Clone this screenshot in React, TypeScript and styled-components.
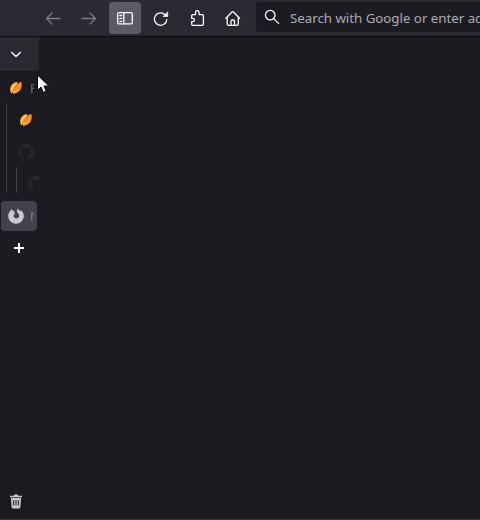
import React from "react";
import styled, { createGlobalStyle } from "styled-components";

const GlobalStyle = createGlobalStyle`
  body { margin: 0; background: #1c1b22; overflow: hidden; }
  * { box-sizing: border-box; }
`;

const Browser = styled.div`
  display: flex;
  flex-direction: column;
  width: 480px;
  height: 520px;
  overflow: hidden;
  position: relative;
  background: #1c1b22;
  border-bottom: 1px solid #38373d;
  color: #fbfbfe;
  font-family: "Noto Sans", "Open Sans", sans-serif;
`;

const Toolbar = styled.header`
  display: flex;
  flex: none;
  gap: 4px;
  height: 37px;
  padding: 2px 0 0 37px;
  background: #2b2a33;
  border-bottom: 1px solid #0c0c0d;
`;

const ToolButton = styled.button<{ $active?: boolean; $dim?: boolean }>`
  display: flex;
  flex: none;
  align-items: center;
  justify-content: center;
  width: 32px;
  height: 32px;
  padding: 0;
  border: 0;
  border-radius: 4px;
  background: ${(p) => (p.$active ? "#5b5b66" : "transparent")};
  color: ${(p) => (p.$dim ? "#7d7c83" : "#fbfbfe")};
`;

const UrlBar = styled.div`
  display: flex;
  flex: 1;
  align-items: center;
  gap: 10px;
  height: 30px;
  margin-left: 3px;
  padding-left: 8px;
  border-radius: 4px 0 0 4px;
  background: #1c1b22;
  overflow: hidden;
`;

const Placeholder = styled.span`
  flex: none;
  color: #acabb1;
  font-size: 13.3px;
  letter-spacing: -0.02px;
  line-height: 30px;
  white-space: nowrap;
  padding-top: 2px;
`;

const Icon = styled.svg`
  display: block;
  flex: none;
  width: 16px;
  height: 16px;
  fill: none;
  stroke: currentColor;
  stroke-width: 1.3;
  stroke-linecap: round;
  stroke-linejoin: round;
`;

const Sidebar = styled.aside`
  display: flex;
  flex: 1;
  flex-direction: column;
  width: 39px;
  overflow: hidden;
`;

const SidebarHeader = styled.div`
  flex: none;
  height: 34px;
  padding: 9px 0 0 8px;
  background: #2b2a33;
`;

const TabTree = styled.div`
  flex: none;
  padding-top: 1px;
`;

const TabRow = styled.div<{ $inset?: number; $last?: boolean }>`
  display: flex;
  align-items: ${(p) => (p.$last ? "flex-start" : "center")};
  gap: 6px;
  height: ${(p) => (p.$last ? 25 : 32)}px;
  padding-top: ${(p) => (p.$last ? 8 : 0)}px;
  padding-left: ${(p) => p.$inset ?? 8}px;
`;

const Branch = styled.div<{ $indent: number }>`
  margin-top: -1px;
  margin-left: ${(p) => p.$indent}px;
  padding-top: 1px;
  border-left: 1px solid #42414c;
`;

const ActiveTab = styled.div`
  display: flex;
  flex: none;
  align-items: center;
  gap: 6px;
  width: 36px;
  height: 30px;
  margin: 8px 0 0 1px;
  padding-left: 7px;
  border-radius: 4px;
  background: #42414d;
  overflow: hidden;
`;

const TabLabel = styled.span`
  width: 5px;
  overflow: hidden;
  color: #b0afb6;
  font-size: 13.3px;
  line-height: 18px;
  white-space: nowrap;
  mask-image: linear-gradient(to right, rgba(0, 0, 0, 0.8), rgba(0, 0, 0, 0.15));
`;

const GithubMark = styled(Icon)`
  fill: #252a30;
  stroke: none;
`;

const NewTab = styled.button`
  display: flex;
  flex: none;
  align-items: center;
  justify-content: center;
  width: 38px;
  height: 34px;
  padding: 0;
  border: 0;
  background: none;
  color: #fff;
`;

const TrashButton = styled.button`
  margin: auto 0 10px 8px;
  padding: 0;
  width: 16px;
  border: 0;
  background: none;
  color: #c9c9cd;
`;

const Pointer = styled.svg`
  position: absolute;
  left: 36px;
  top: 74px;
  width: 14px;
  height: 21px;
`;

const Petals = ({ id }: { id: string }) => (
  <Icon viewBox="0 0 16 16" stroke="none">
    <defs>
      <linearGradient id={id} x1="0" y1="0" x2="0.3" y2="1">
        <stop offset="0" stopColor="#ff7a22" />
        <stop offset="1" stopColor="#ffa62e" />
      </linearGradient>
    </defs>
    <path d="M9.400 2C5 2.300 2 5.800 2.200 9.800c.1 1.500.5 2.700 1.200 3.600C6 11 8.800 7.500 9.400 2Z" fill="#ffbe45" stroke="none" />
    <path d="M13.200 2C8.800 3.200 6 6.500 5.200 10c-.3 1.500-.4 2.700 0 4 4.300-.7 7.700-3.500 8.400-7.200.3-1.800.1-3.500-.4-4.800Z" fill={`url(#${id})`} stroke="none" />
    <path d="M9.300 3.500C8.700 6.300 6.900 8.200 5 10.800" stroke="#b86420" strokeWidth=".5" />
  </Icon>
);

const Github = () => (
  <GithubMark viewBox="0 0 16 16">
    <path d="M8 0a8 8 0 0 0-2.530 15.590c.4.070.55-.17.55-.38v-1.490c-2.010.37-2.530-.49-2.690-.94-.09-.23-.48-.94-.82-1.130-.28-.15-.68-.52-.01-.53.63-.01 1.080.58 1.230.82.72 1.210 1.870.87 2.330.66.07-.52.280-.87.51-1.070-1.780-.2-3.640-.89-3.640-3.950 0-.87.31-1.590.82-2.150-.08-.2-.36-1.020.08-2.120 0 0 .67-.21 2.200.82a7.400 7.400 0 0 1 4 0c1.530-1.040 2.200-.82 2.200-.82.44 1.100.16 1.920.08 2.120.51.56.82 1.270.82 2.150 0 3.070-1.870 3.750-3.650 3.950.29.25.54.73.54 1.480v2.200c0 .21.15.46.55.38A8 8 0 0 0 8 0Z" />
  </GithubMark>
);

export default function App() {
  return (
    <Browser>
      <GlobalStyle />
      <Toolbar>
        <ToolButton $dim aria-label="Back">
          <Icon viewBox="0 0 16 16"><path d="M15 8.500H1.500M7 3 1.500 8.500 7 14" /></Icon>
        </ToolButton>
        <ToolButton $dim aria-label="Forward">
          <Icon viewBox="0 0 16 16"><path d="M1 8.500h13.500M9 3l5.500 5.500L9 14" /></Icon>
        </ToolButton>
        <ToolButton $active aria-label="Sidebar">
          <Icon viewBox="0 0 16 16">
            <rect x=".65" y="2.600" width="14.700" height="11.300" rx="1.600" />
            <path d="M6.800 2.600v11.300M2.900 5.500h1.800M2.900 8.400h1.800M2.900 11.300h1.800" />
          </Icon>
        </ToolButton>
        <ToolButton aria-label="Reload">
          <Icon viewBox="0 0 16 16">
            <path d="M12.300 5A6.200 6.200 0 1 0 13.800 9.600" />
            <path d="M14.700 2.200v4.300h-4.300Z" fill="currentColor" strokeWidth=".7" />
          </Icon>
        </ToolButton>
        <ToolButton aria-label="Extensions">
          <Icon viewBox="0 0 16 16">
            <path d="M3.700 4.600h2.800V2.500a1.800 1.800 0 0 1 3.600 0v2.100h3.300q1 0 1 1v8.700q0 1-1 1H3.700q-1 0-1-1v-2.700h1.100a1.600 1.600 0 0 0 0-3.200H2.700V5.600q0-1 1-1Z" />
          </Icon>
        </ToolButton>
        <ToolButton aria-label="Home">
          <Icon viewBox="0 0 16 16">
            <path d="M.9 8.300 7 2q.75-.7 1.500 0l6.100 6.300M2.200 7.300v6.400q0 1.600 1.600 1.600h7.900q1.600 0 1.600-1.600V7.300M6 15.200v-4q0-1.200 1.200-1.200h1.100q1.200 0 1.200 1.200v4" />
          </Icon>
        </ToolButton>
        <UrlBar>
          <Icon viewBox="0 0 16 16">
            <circle cx="6.200" cy="6.100" r="4.800" /><path d="m9.700 9.600 4.900 4.800" />
          </Icon>
          <Placeholder>Search with Google or enter address</Placeholder>
        </UrlBar>
      </Toolbar>
      <Sidebar>
        <SidebarHeader>
          <Icon viewBox="0 0 16 16"><path d="m3.700 6.500 4.300 4 4.300-4" strokeWidth="1.500" /></Icon>
        </SidebarHeader>
        <TabTree>
          <TabRow><Petals id="petal-parent" /><TabLabel>Floorp</TabLabel></TabRow>
          <Branch $indent={6}>
            <TabRow $inset={11}><Petals id="petal-child" /></TabRow>
            <TabRow $inset={11}><Github /></TabRow>
            <Branch $indent={9}>
              <TabRow $inset={11} $last><Github /></TabRow>
            </Branch>
          </Branch>
        </TabTree>
        <ActiveTab>
          <Icon viewBox="0 0 16 16">
            <path d="M2.600 2.400 3.300 1l1.500 1.800 2 .3-.8 1.700 1.600 1-2 1C5 8.700 6.400 10.400 8.400 10.400c1.800 0 3-1.400 2.800-3C11 6 10 5 9.300 4.200c-.6-1-.4-2.600.9-3.700.3 1.300 1.300 1.900 2.200 3l.6-1.200c2 1.600 2.900 3.600 2.800 5.900A7.800 7.800 0 0 1 8 15.800 7.800 7.800 0 0 1 .2 8C.2 5.700 1 4 2.600 2.400Z" fill="#cacace" stroke="none" />
          </Icon>
          <TabLabel>New Tab</TabLabel>
        </ActiveTab>
        <NewTab aria-label="New tab">
          <Icon viewBox="0 0 16 16"><path d="M8 3v10M3 8h10" strokeWidth="2" strokeLinecap="butt" /></Icon>
        </NewTab>
        <TrashButton aria-label="Trash">
          <Icon viewBox="0 0 16 16">
            <path d="M2 3.500h12M6 2.300h4" strokeWidth="1.500" strokeLinecap="butt" />
            <path d="M3 5h10l-.6 9q-.1 1.500-1.500 1.500H5.100q-1.400 0-1.500-1.500Z" fill="currentColor" stroke="none" />
            <path d="M5.700 7v5.500M8 7v5.500M10.300 7v5.500" stroke="#1c1b22" strokeWidth="1" strokeLinecap="butt" />
          </Icon>
        </TrashButton>
      </Sidebar>
      <Pointer viewBox="0 0 14 21">
        <path d="M1.500 1v15.300l3.500-3.200 2.200 5.300 3-1.200-2.200-5.200h4.800Z" fill="#fff" stroke="#000" strokeWidth="1" />
      </Pointer>
    </Browser>
  );
}
